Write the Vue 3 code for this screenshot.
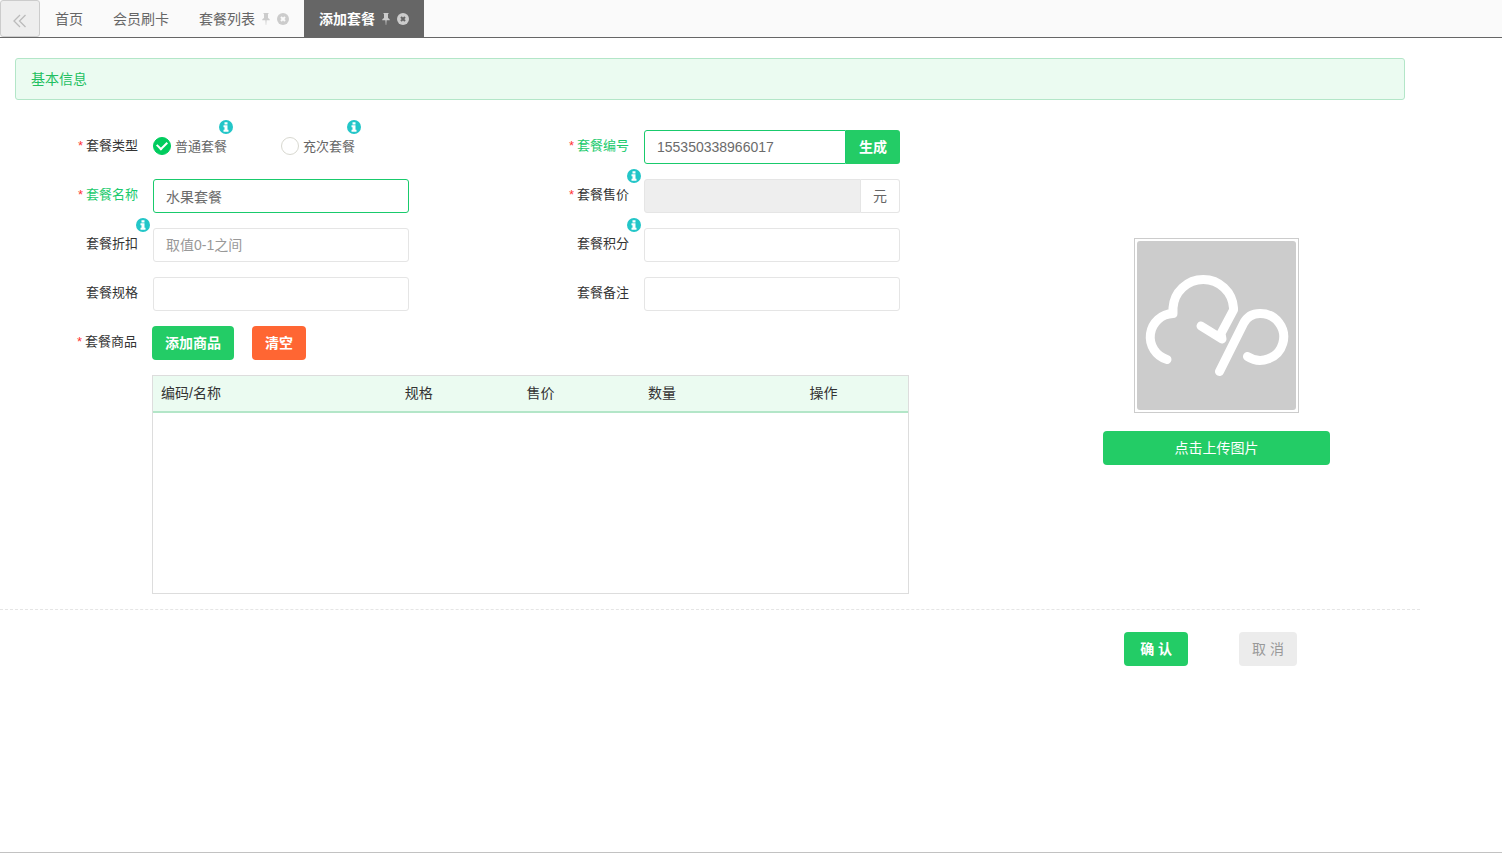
<script setup>
import { ref } from 'vue'

const tabs = [
  { name: '首页' },
  { name: '会员刷卡' },
  { name: '套餐列表', closable: true },
  { name: '添加套餐', closable: true, active: true },
]
const kind = ref('normal')
const code = ref('155350338966017')
const title = ref('水果套餐')
const discount = ref('')
const points = ref('')
const spec = ref('')
const remark = ref('')
</script>

<template>
  <div class="page">
    <nav class="tabs">
      <button class="collapse" type="button" aria-label="收起">
        <svg width="14" height="14" viewBox="0 0 14 14"><path d="M7 1 1 7l6 6M12.500 1l-6 6 6 6" /></svg>
      </button>
      <a v-for="t in tabs" :key="t.name" href="#" class="tab" :class="{ active: t.active }">
        <span>{{ t.name }}</span>
        <template v-if="t.closable">
          <svg class="pin" width="8" height="12" viewBox="0 0 8 12"><path d="M1.500 0h5v1H6v4c1.200.5 1.800 1.200 1.800 2.200H4.600L4.200 12h-.4l-.4-4.800H.2C.2 6.200.8 5.500 2 5V1h-.5z" /></svg>
          <svg class="close" width="12" height="12" viewBox="0 0 12 12"><circle cx="6" cy="6" r="6" /><path d="m4 4 4 4m0-4L4 8" /></svg>
        </template>
      </a>
    </nav>

    <main class="content">
      <h1 class="banner">基本信息</h1>

      <div class="body">
        <form class="form" @submit.prevent>
          <div class="fields">
            <div class="row">
              <span id="kind" class="label"><i>*</i>套餐类型</span>
              <div class="radios" role="radiogroup" aria-labelledby="kind">
                <label class="radio">
                  <input v-model="kind" type="radio" value="normal" /><span>普通套餐</span>
                  <svg class="info" viewBox="0 0 14 14"><circle cx="7" cy="7" r="7" /><path d="M5.500 2.200h3v2.300h-3zM4.500 5.300h4v4.500h1v2h-5v-2h1V7.300h-1z" /></svg>
                </label>
                <label class="radio">
                  <input v-model="kind" type="radio" value="times" /><span>充次套餐</span>
                  <svg class="info" viewBox="0 0 14 14"><circle cx="7" cy="7" r="7" /><path d="M5.500 2.200h3v2.300h-3zM4.500 5.300h4v4.500h1v2h-5v-2h1V7.300h-1z" /></svg>
                </label>
              </div>
            </div>

            <div class="row valid">
              <label class="label" for="code"><i>*</i>套餐编号</label>
              <div class="group">
                <input id="code" v-model="code" type="text" />
                <button class="btn green addon" type="button">生成</button>
              </div>
            </div>

            <div class="row valid">
              <label class="label" for="title"><i>*</i>套餐名称</label>
              <div class="group"><input id="title" v-model="title" type="text" /></div>
            </div>

            <div class="row">
              <label class="label" for="price"><i>*</i>套餐售价
                <svg class="info" viewBox="0 0 14 14"><circle cx="7" cy="7" r="7" /><path d="M5.500 2.200h3v2.300h-3zM4.500 5.300h4v4.500h1v2h-5v-2h1V7.300h-1z" /></svg>
              </label>
              <div class="group">
                <input id="price" type="text" disabled />
                <span class="unit">元</span>
              </div>
            </div>

            <div class="row">
              <label class="label" for="discount">套餐折扣
                <svg class="info" viewBox="0 0 14 14"><circle cx="7" cy="7" r="7" /><path d="M5.500 2.200h3v2.300h-3zM4.500 5.300h4v4.500h1v2h-5v-2h1V7.300h-1z" /></svg>
              </label>
              <div class="group"><input id="discount" v-model="discount" type="text" placeholder="取值0-1之间" /></div>
            </div>

            <div class="row">
              <label class="label" for="points">套餐积分
                <svg class="info" viewBox="0 0 14 14"><circle cx="7" cy="7" r="7" /><path d="M5.500 2.200h3v2.300h-3zM4.500 5.300h4v4.500h1v2h-5v-2h1V7.300h-1z" /></svg>
              </label>
              <div class="group"><input id="points" v-model="points" type="text" /></div>
            </div>

            <div class="row">
              <label class="label" for="spec">套餐规格</label>
              <div class="group"><input id="spec" v-model="spec" type="text" /></div>
            </div>

            <div class="row">
              <label class="label" for="remark">套餐备注</label>
              <div class="group"><input id="remark" v-model="remark" type="text" /></div>
            </div>
          </div>

          <div class="goods">
            <span class="label"><i>*</i>套餐商品</span>
            <div class="goods-main">
              <div class="goods-actions">
                <button class="btn green" type="button">添加商品</button>
                <button class="btn orange" type="button">清空</button>
              </div>
              <div class="table-box">
                <table>
                  <colgroup>
                    <col class="c-name" /><col class="c-mid" /><col class="c-mid" /><col class="c-count" /><col />
                  </colgroup>
                  <thead>
                    <tr><th>编码/名称</th><th>规格</th><th>售价</th><th>数量</th><th>操作</th></tr>
                  </thead>
                  <tbody></tbody>
                </table>
              </div>
            </div>
          </div>
        </form>

        <aside class="upload">
          <div class="frame">
            <svg width="159" height="169" viewBox="0 0 159 169" role="img" aria-label="套餐图片">
              <path d="M30 118.500A23.500 23.500 0 0 1 36 72.500V67A30.300 30.300 0 0 1 96.500 67V69L84 92.500 85 98 64 85" />
              <path d="M82.500 130.500 106.500 82.500C110 75.500 115 72.500 123 72.500A23.400 23.400 0 1 1 110.500 115.500" />
            </svg>
          </div>
          <button class="btn green wide" type="button">点击上传图片</button>
        </aside>
      </div>

      <footer class="footer">
        <button class="btn green confirm" type="button">确 认</button>
        <button class="btn gray" type="button">取 消</button>
      </footer>
    </main>
  </div>
</template>

<style>
body {
  margin: 0;
  background: #fff;
}
</style>

<style scoped>
* {
  box-sizing: border-box;
}
.page {
  min-height: calc(100vh - 1px);
  border-bottom: 1px solid #c2c2c2;
  background: #fff;
  color: #333;
  font-family: "Liberation Sans", "Noto Sans CJK SC", sans-serif;
  font-size: 14px;
}
button,
input {
  font-family: inherit;
  font-size: 14px;
}
.tabs {
  display: flex;
  height: 38px;
  background: #fafafa;
  border-bottom: 1px solid #666;
}
.collapse {
  width: 40px;
  padding: 5px 0 0;
  border: 1px solid #ccc;
  border-radius: 3px;
  background: #eee;
}
.collapse svg {
  display: block;
  margin: 0 auto;
  fill: none;
  stroke: #bbb;
  stroke-width: 1.3;
}
.tab {
  display: flex;
  align-items: center;
  padding: 0 15px;
  color: #666;
  text-decoration: none;
}
.tab span,
.radio span {
  padding-bottom: 2px;
}
.tab.active {
  background: #666;
  color: #fff;
  font-weight: bold;
}
.pin {
  margin-left: 7px;
  fill: #ccc;
}
.close {
  margin-left: 7px;
  fill: #ccc;
}
.close path {
  stroke: #fafafa;
  stroke-width: 2;
}
.active .close path {
  stroke: #666;
}
.content {
  margin-right: 82px;
}
.banner {
  margin: 20px 15px 30px;
  padding: 0 15px;
  border: 1px solid #b3e6c8;
  border-radius: 3px;
  background: #ebfbf1;
  color: #22bf60;
  font-size: 14px;
  font-weight: normal;
  line-height: 40px;
}
.body {
  display: grid;
  grid-template-columns: 1013fr 407fr;
}
.fields {
  display: grid;
  grid-template-columns: 1fr 1fr;
  row-gap: 15px;
  margin-right: 31px;
}
.row {
  display: flex;
  gap: 15px;
  height: 34px;
  padding-right: 82px;
}
.label {
  position: relative;
  flex: none;
  width: 138px;
  text-align: right;
  font-size: 13px;
  line-height: 32px;
}
.label i {
  margin-right: 3px;
  color: #f33;
  font-style: normal;
}
.valid .label {
  color: #19ca6c;
}
.info {
  position: absolute;
  top: -10px;
  right: -12px;
  width: 14px;
  height: 14px;
  fill: #23c6c8;
}
.info path {
  fill: #fff;
}
.group {
  display: flex;
  flex: 1;
  min-width: 0;
}
.group input {
  flex: 1;
  min-width: 0;
  height: 34px;
  padding: 0 12px;
  border: 1px solid #e5e5e5;
  border-radius: 3px;
  outline: none;
  background: #fff;
  color: #6b6b6b;
}
.group input::placeholder {
  color: #999;
}
.group input:disabled {
  background: #eee;
}
.group input:not(:last-child) {
  border-top-right-radius: 0;
  border-bottom-right-radius: 0;
}
.valid .group input {
  border-color: #19ca6c;
}
.unit {
  width: 39px;
  border: 1px solid #e5e5e5;
  border-left: 0;
  border-radius: 0 3px 3px 0;
  color: #666;
  line-height: 32px;
  text-align: center;
}
.radios {
  display: flex;
}
.radio {
  position: relative;
  display: flex;
  align-items: center;
  gap: 4px;
  width: 128px;
  height: 32px;
  color: #666;
  font-size: 13px;
}
.radio input {
  appearance: none;
  width: 18px;
  height: 18px;
  margin: 0;
  border: 1px solid #d8d8d0;
  border-radius: 50%;
  background: #fff;
}
.radio input:checked {
  display: grid;
  place-items: center;
  border-color: #00cc5e;
  background: #00cc5e;
}
.radio input:checked::before {
  content: "";
  width: 8px;
  height: 5px;
  margin-bottom: 3px;
  border: solid #fff;
  border-width: 0 0 2px 2px;
  transform: rotate(-45deg);
}
.radio .info {
  right: auto;
  left: 66px;
}
.btn {
  height: 34px;
  padding: 0 13px 2px;
  border: 0;
  border-radius: 4px;
  color: #fff;
  font-weight: bold;
}
.green {
  background: #23cc66;
}
.orange {
  background: #ff6633;
}
.gray {
  background: #ececec;
  color: #999;
  font-weight: normal;
}
.addon {
  border-radius: 0 3px 3px 0;
}
.goods {
  display: flex;
  gap: 15px;
  margin: 15px 104px 15px 0;
}
.goods .label {
  width: 137px;
}
.goods-main {
  flex: 1;
}
.goods-actions {
  display: flex;
  gap: 18px;
  margin-bottom: 15px;
}
.table-box {
  min-height: 219px;
  border: 1px solid #ddd;
}
table {
  width: 100%;
  table-layout: fixed;
  border-spacing: 0;
}
.c-name {
  width: 32.3%;
}
.c-mid {
  width: 16.1%;
}
.c-count {
  width: 21.4%;
}
th {
  height: 37px;
  padding: 0 8px 4px;
  border-bottom: 2px solid #b3e6c8;
  background: #ebfbf1;
  font-weight: normal;
  text-align: left;
}
.upload {
  display: flex;
  flex-direction: column;
  align-items: center;
  gap: 18px;
  padding-top: 108px;
}
.frame {
  padding: 2px;
  border: 1px solid #ccc;
}
.frame svg {
  display: block;
  border-radius: 3px;
  background: #ccc;
  fill: none;
  stroke: #fff;
  stroke-width: 9;
  stroke-linecap: round;
  stroke-linejoin: round;
}
.wide {
  width: 56%;
  font-weight: normal;
}
.footer {
  display: flex;
  justify-content: flex-end;
  gap: 51px;
  padding: 22px 123px 22px 0;
  border-top: 1px dashed #e5e5e5;
}
.confirm {
  padding-right: 16px;
  padding-left: 16px;
}
</style>
